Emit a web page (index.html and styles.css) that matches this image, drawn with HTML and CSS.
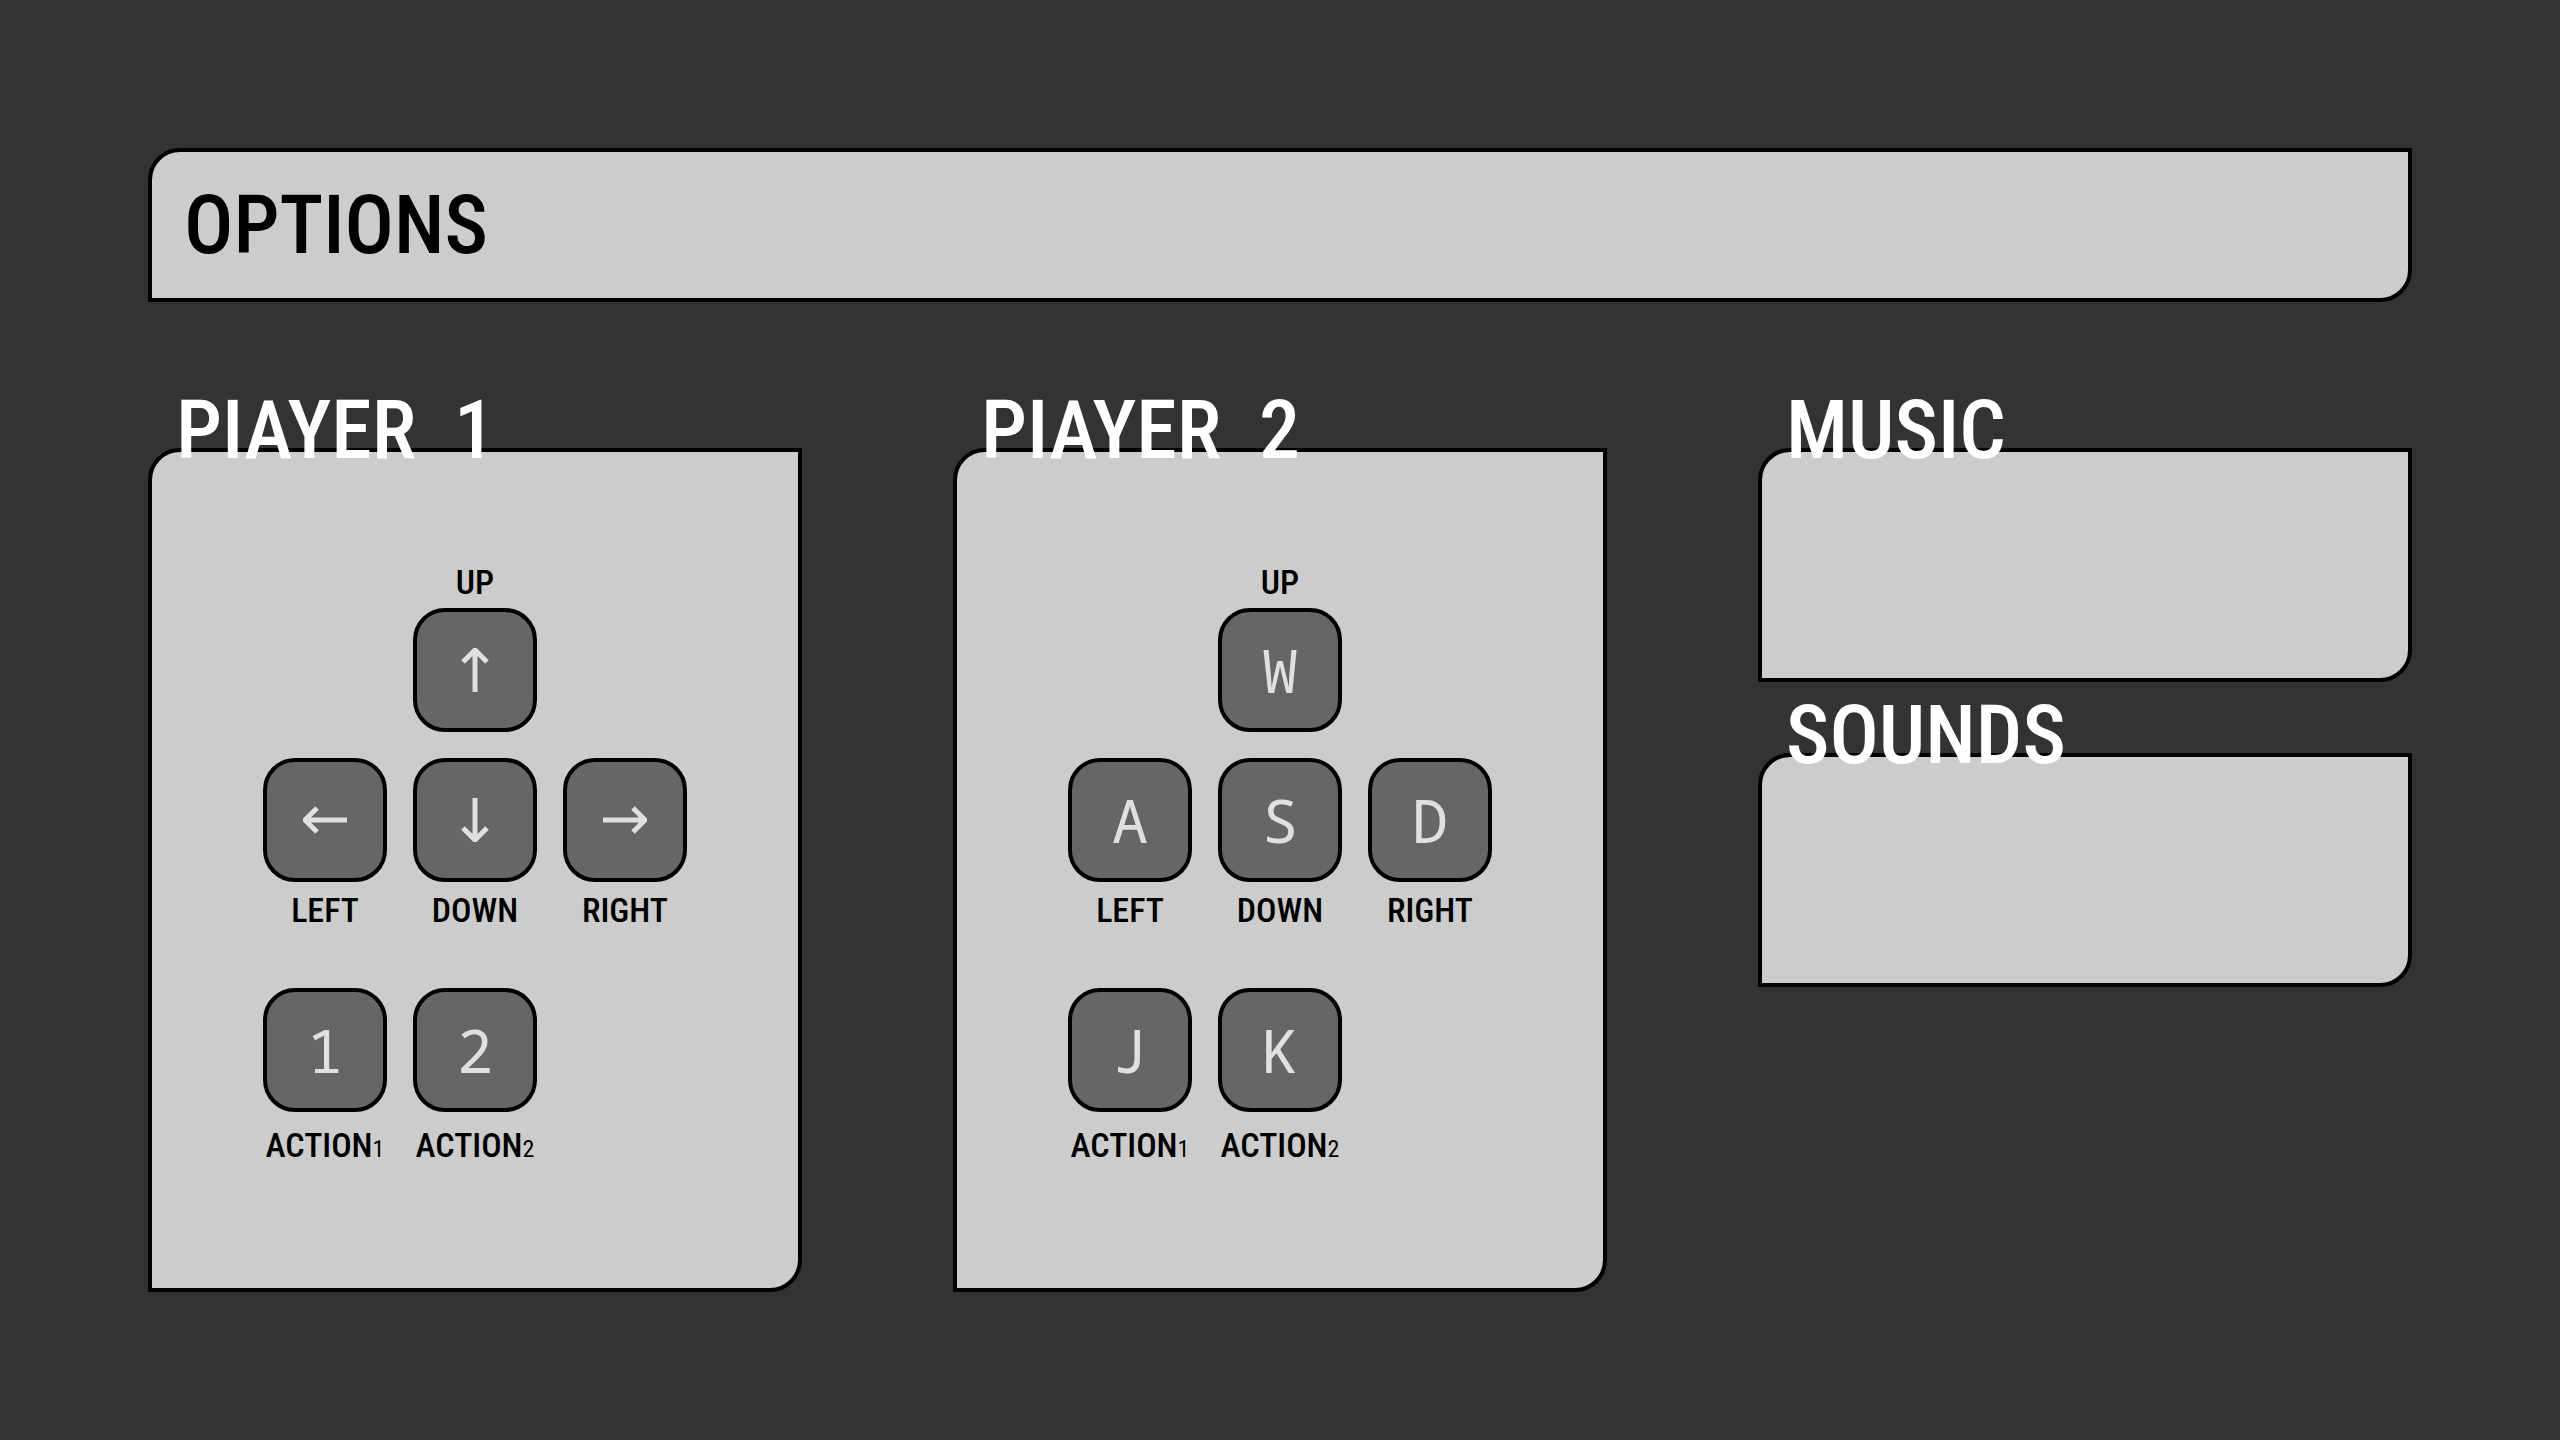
FILE: index.html
```html
<!DOCTYPE html>
<html lang="en">
<head>
<meta charset="utf-8">
<meta name="viewport" content="width=device-width, initial-scale=1">
<title>Options</title>
<link rel="stylesheet" href="styles.css">
</head>
<body>
<main class="page">
  <header class="panel header">
    <h1 class="title">OPTIONS</h1>
  </header>
  <div class="columns">
    <section class="group">
      <h2 class="title group-title">PIAYER&nbsp; 1</h2>
      <div class="panel controls">
        <div class="pad">
          <div class="binding up">
            <label class="label" for="p1-up">UP</label>
            <button class="key" id="p1-up" type="button"><svg class="arrow" viewBox="0 0 44 44" aria-hidden="true"><path d="M22 44V3M10 14L22 2L34 14"/></svg></button>
          </div>
          <div class="binding left">
            <button class="key" id="p1-left" type="button"><svg class="arrow" viewBox="0 0 44 44" aria-hidden="true"><path d="M44 22H3M14 10L2 22L14 34"/></svg></button>
            <label class="label" for="p1-left">LEFT</label>
          </div>
          <div class="binding">
            <button class="key" id="p1-down" type="button"><svg class="arrow" viewBox="0 0 44 44" aria-hidden="true"><path d="M22 0V41M10 30L22 42L34 30"/></svg></button>
            <label class="label" for="p1-down">DOWN</label>
          </div>
          <div class="binding">
            <button class="key" id="p1-right" type="button"><svg class="arrow" viewBox="0 0 44 44" aria-hidden="true"><path d="M0 22H41M30 10L42 22L30 34"/></svg></button>
            <label class="label" for="p1-right">RIGHT</label>
          </div>
        </div>
        <div class="pad">
          <div class="binding action">
            <button class="key" id="p1-a1" type="button">1</button>
            <label class="label" for="p1-a1">ACTION<span class="index">1</span></label>
          </div>
          <div class="binding action">
            <button class="key" id="p1-a2" type="button">2</button>
            <label class="label" for="p1-a2">ACTION<span class="index">2</span></label>
          </div>
        </div>
      </div>
    </section>
    <section class="group">
      <h2 class="title group-title">PIAYER&nbsp; 2</h2>
      <div class="panel controls">
        <div class="pad">
          <div class="binding up">
            <label class="label" for="p2-up">UP</label>
            <button class="key" id="p2-up" type="button">W</button>
          </div>
          <div class="binding left">
            <button class="key" id="p2-left" type="button">A</button>
            <label class="label" for="p2-left">LEFT</label>
          </div>
          <div class="binding">
            <button class="key" id="p2-down" type="button">S</button>
            <label class="label" for="p2-down">DOWN</label>
          </div>
          <div class="binding">
            <button class="key" id="p2-right" type="button">D</button>
            <label class="label" for="p2-right">RIGHT</label>
          </div>
        </div>
        <div class="pad">
          <div class="binding action">
            <button class="key" id="p2-a1" type="button">J</button>
            <label class="label" for="p2-a1">ACTION<span class="index">1</span></label>
          </div>
          <div class="binding action">
            <button class="key" id="p2-a2" type="button">K</button>
            <label class="label" for="p2-a2">ACTION<span class="index">2</span></label>
          </div>
        </div>
      </div>
    </section>
    <div class="audio">
      <section class="group">
        <h2 class="title group-title">MUSIC</h2>
        <div class="panel slot"></div>
      </section>
      <section class="group">
        <h2 class="title group-title">SOUNDS</h2>
        <div class="panel slot"></div>
      </section>
    </div>
  </div>
</main>
</body>
</html>
```
FILE: styles.css
```css
* {
  box-sizing: border-box;
}

body {
  margin: 0;
  background: #333;
  color: #000;
  font-family: "Roboto Condensed", "Open Sans Condensed", Roboto, sans-serif;
}

.page {
  padding: 148px;
}

.panel {
  border: 4px solid #000;
  border-radius: 32px 0;
  background: #ccc;
}

.title {
  margin: 0;
  font-size: 82px;
  font-weight: 500;
  line-height: 82px;
  white-space: nowrap;
}

.header {
  padding: 32px;
}

.columns {
  display: grid;
  grid-template-columns: repeat(3, minmax(0, 1fr));
  gap: 151px;
  align-items: start;
  margin-top: 87px;
}

/* Group headings straddle the top edge of their panel. */
.group-title {
  position: relative;
  z-index: 1;
  margin-bottom: -23px;
  padding-left: 28px;
  color: #fff;
}

.controls {
  display: flex;
  flex-direction: column;
  align-items: center;
  gap: 58px;
  padding: 110px 0 123px;
}

.pad {
  display: grid;
  grid-template-columns: repeat(3, 124px);
  gap: 26px;
}

.binding {
  display: flex;
  flex-direction: column;
  align-items: center;
  gap: 8px;
}

.up {
  grid-column: 2;
  gap: 6px;
}

.left {
  grid-column: 1;
}

.action {
  gap: 13px;
}

.key {
  display: flex;
  align-items: center;
  justify-content: center;
  width: 124px;
  height: 124px;
  padding: 0;
  border: 4px solid #000;
  border-radius: 32px;
  background: #666;
  color: #e0e0e0;
  font-family: "Noto Sans Mono", "DejaVu Sans Mono", monospace;
  font-size: 60px;
  line-height: 80px;
}

.arrow {
  width: 44px;
  height: 44px;
  fill: none;
  stroke: currentColor;
  stroke-width: 5;
}

.label {
  font-size: 34px;
  font-weight: 500;
  line-height: 40px;
  white-space: nowrap;
}

.index {
  font-size: 24px;
  font-weight: 400;
  line-height: 24px;
}

.audio {
  display: grid;
  gap: 12px;
}

.slot {
  min-height: 234px;
}
```
